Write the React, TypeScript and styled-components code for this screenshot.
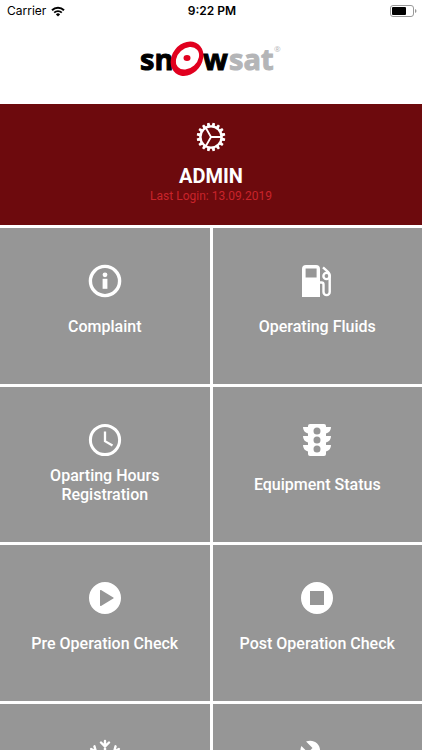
import React from "react";
import styled, { createGlobalStyle } from "styled-components";
import { MdBuild } from "react-icons/md";

const GlobalStyle = createGlobalStyle`
  *, *::before, *::after { box-sizing: border-box; }
  html, body, #root { height: 100%; }
  body { margin: 0; background: #fff; }
`;

const Screen = styled.div`
  display: flex;
  flex-direction: column;
  height: 100%;
  overflow: hidden;
  background: #fff;
  font-family: Roboto, sans-serif;
`;

const StatusBar = styled.div`
  display: grid;
  grid-template-columns: 1fr auto 1fr;
  align-items: center;
  flex-shrink: 0;
  height: 22px;
  padding: 0 5px 0 7px;
  color: #000;
  font: 400 12px/22px Inter, sans-serif;
`;

const Carrier = styled.div`
  display: flex;
  align-items: center;
  gap: 5px;
`;

const Clock = styled.div`
  font-weight: 600;
`;

const Battery = styled.svg`
  justify-self: end;
`;

const Brand = styled.header`
  display: flex;
  flex-shrink: 0;
  justify-content: center;
  height: 82px;
  padding-top: 12px;
`;

const UserPanel = styled.section`
  display: flex;
  flex-direction: column;
  flex-shrink: 0;
  align-items: center;
  height: 121px;
  padding-top: 18px;
  background: #6d0a0d;
`;

const SettingsButton = styled.button`
  display: flex;
  padding: 0;
  border: 0;
  background: none;
  color: #fff;
  cursor: pointer;
`;

const UserName = styled.h1`
  margin: 12px 0 0;
  color: #fff;
  font-size: 20px;
  font-weight: 700;
  line-height: 24px;
`;

const LastLogin = styled.p`
  margin: 0;
  color: #c9242b;
  font-size: 12px;
  line-height: 16px;
`;

const Menu = styled.nav`
  display: grid;
  grid-template-columns: 1fr 1fr;
  flex-shrink: 0;
  gap: 3px;
  margin-top: 3px;
`;

const Tile = styled.button`
  display: flex;
  flex-direction: column;
  align-items: center;
  aspect-ratio: 35 / 26;
  padding: 35px 16px 0;
  border: 0;
  background: #969696;
  color: #fff;
  font: 500 16px/19px Roboto, sans-serif;
  cursor: pointer;
`;

const TileIcon = styled.span`
  display: flex;
  align-items: center;
  justify-content: center;
  width: 36px;
  height: 36px;
`;

const TileLabel = styled.span`
  display: flex;
  align-items: center;
  justify-content: center;
  max-width: 160px;
  height: 38px;
  margin-top: 8px;
  text-align: center;
`;

const WifiIcon = () => (
  <svg width="14" height="11" viewBox="0 0 14 11" aria-hidden="true">
    <path d="M1 4.2A8.6 8.6 0 0 1 13 4.2" fill="none" stroke="#000" strokeWidth="2" />
    <path d="M3.2 6.6A5.4 5.4 0 0 1 10.8 6.6" fill="none" stroke="#000" strokeWidth="1.8" />
    <path d="M7 10.6 4.9 8.4a3 3 0 0 1 4.2 0z" />
  </svg>
);

const BatteryIcon = () => (
  <Battery width="27" height="12" viewBox="0 0 27 12" aria-label="Battery">
    <rect x=".5" y=".5" width="23" height="11" rx="2.5" fill="#fff" stroke="#999" />
    <rect x="2" y="2" width="14" height="8" rx="1" />
    <path d="M25 4v4q1.5-.6 1.5-2T25 4z" fill="#999" />
  </Battery>
);

const Logo = () => (
  <svg width="144" height="48" viewBox="0 0 144 48" role="img" aria-label="snowsat">
    <g fontFamily="'Open Sans', sans-serif" fontWeight="700" fontSize="29" strokeWidth="1">
      <text x="1" y="36" stroke="#000">sn</text>
      <text x="64" y="36" stroke="#000">w</text>
      <text x="90" y="36" fill="#b4b5b7" stroke="#b4b5b7">sat</text>
    </g>
    <text x="135" y="18" fill="#b4b5b7" fontFamily="'Open Sans', sans-serif" fontSize="8">®</text>
    <ellipse cx="48" cy="24.700" rx="18.400" ry="15" fill="#e1001f" transform="rotate(-52 48 24.700)" />
    <ellipse cx="48.500" cy="24.300" rx="12.900" ry="9.800" fill="#fff" transform="rotate(-42 48.500 24.300)" />
    <ellipse cx="48" cy="24" rx="3.500" ry="3" fill="#e1001f" />
  </svg>
);

const GearIcon = () => (
  <svg width="30" height="30" viewBox="-15 -15 30 30" fill="none" stroke="currentColor" aria-hidden="true">
    <circle r="10.6" strokeWidth="2.4" />
    {Array.from({ length: 16 }, (_, i) => (
      <path key={i} d="M11-1.7 14.300-1.200V1.200L11 1.700z" fill="currentColor" stroke="none" transform={`rotate(${i * 22.5 + 11.25})`} />
    ))}
    <path d="M10.500 0H0M-5.200-9.100 0 0-5.200 9.100" strokeWidth="1.900" />
  </svg>
);

const InfoIcon = () => (
  <svg width="34" height="34" viewBox="0 0 34 34" aria-hidden="true">
    <circle cx="17" cy="17" r="14.6" fill="none" stroke="#fff" strokeWidth="3.400" />
    <circle cx="17" cy="10.800" r="2.400" fill="#fff" />
    <rect x="14.600" y="14.800" width="4.800" height="10" fill="#fff" />
  </svg>
);

const ClockIcon = () => (
  <svg width="34" height="34" viewBox="0 0 34 34" fill="none" stroke="#fff" aria-hidden="true">
    <circle cx="17" cy="17" r="14.6" strokeWidth="3" />
    <path d="M17 8.500v9.700l7.500 4.400" strokeWidth="2.300" />
  </svg>
);

const FuelIcon = () => (
  <svg width="32" height="34" viewBox="0 0 32 34" fill="none" aria-hidden="true">
    <path fill="#fff" fillRule="evenodd" d="M5 1h10a4 4 0 0 1 4 4v28H1V5a4 4 0 0 1 4-4zM4.600 4.600v8.800h11V4.600z" />
    <path d="M19 18.500h1.500a2 2 0 0 1 2 2V28a3 3 0 0 0 6.200 0V11.500q0-2-1.500-3.400L22 3.300" stroke="#fff" strokeWidth="2.400" />
    <circle cx="25.500" cy="12" r="3.100" stroke="#fff" strokeWidth="2.400" />
  </svg>
);

const TrafficIcon = () => (
  <svg width="30" height="34" viewBox="0 0 30 34" aria-hidden="true">
    <path
      fill="#fff"
      fillRule="evenodd"
      d="M8 1h14a2 2 0 0 1 2 2v1h5q0 5-5 6.500V13h5q0 5-5 6.500V22h5q0 5-5 6.500V31a2 2 0 0 1-2 2H8a2 2 0 0 1-2-2v-2.500Q1 27 1 22h5v-2.500Q1 18 1 13h5v-2.500Q1 9 1 4h5V3a2 2 0 0 1 2-2zM15 4.500a3.500 3.500 0 1 0 0 7 3.500 3.500 0 0 0 0-7zM15 13.500a3.500 3.500 0 1 0 0 7 3.500 3.500 0 0 0 0-7zM15 22.500a3.500 3.500 0 1 0 0 7 3.500 3.500 0 0 0 0-7z"
    />
  </svg>
);

const PlayIcon = () => (
  <svg width="34" height="34" viewBox="0 0 34 34" aria-hidden="true">
    <path fill="#fff" fillRule="evenodd" d="M17 1a16 16 0 1 0 0 32 16 16 0 0 0 0-32zM13 9 25.300 16.400q1 .6 0 1.200L13 25q-1 .4-1-.7V9.700q0-1.100 1-.7z" />
  </svg>
);

const StopIcon = () => (
  <svg width="34" height="34" viewBox="0 0 34 34" aria-hidden="true">
    <path fill="#fff" fillRule="evenodd" d="M17 1a16 16 0 1 0 0 32 16 16 0 0 0 0-32zM10 10h14v14H10z" />
  </svg>
);

const SnowflakeIcon = () => (
  <svg width="36" height="36" viewBox="-18 -18 36 36" fill="none" stroke="#fff" strokeWidth="2.400" strokeLinecap="round" aria-hidden="true">
    {[0, 60, 120, 180, 240, 300].map((angle) => (
      <path key={angle} d="M0 0V-16M-4-14.500 0-10.500 4-14.500" transform={`rotate(${angle})`} />
    ))}
  </svg>
);

const items = [
  { label: "Complaint", icon: <InfoIcon /> },
  { label: "Operating Fluids", icon: <FuelIcon /> },
  { label: "Oparting Hours Registration", icon: <ClockIcon /> },
  { label: "Equipment Status", icon: <TrafficIcon /> },
  { label: "Pre Operation Check", icon: <PlayIcon /> },
  { label: "Post Operation Check", icon: <StopIcon /> },
  { label: "", name: "Winter service", icon: <SnowflakeIcon /> },
  { label: "", name: "Repair", icon: <MdBuild size={36} /> },
];

export default function App() {
  return (
    <Screen>
      <GlobalStyle />
      <StatusBar>
        <Carrier>
          Carrier
          <WifiIcon />
        </Carrier>
        <Clock>9:22 PM</Clock>
        <BatteryIcon />
      </StatusBar>
      <Brand>
        <Logo />
      </Brand>
      <UserPanel>
        <SettingsButton aria-label="Settings">
          <GearIcon />
        </SettingsButton>
        <UserName>ADMIN</UserName>
        <LastLogin>Last Login: 13.09.2019</LastLogin>
      </UserPanel>
      <Menu>
        {items.map((item, i) => (
          <Tile key={i} aria-label={item.name}>
            <TileIcon>{item.icon}</TileIcon>
            <TileLabel>{item.label}</TileLabel>
          </Tile>
        ))}
      </Menu>
    </Screen>
  );
}
